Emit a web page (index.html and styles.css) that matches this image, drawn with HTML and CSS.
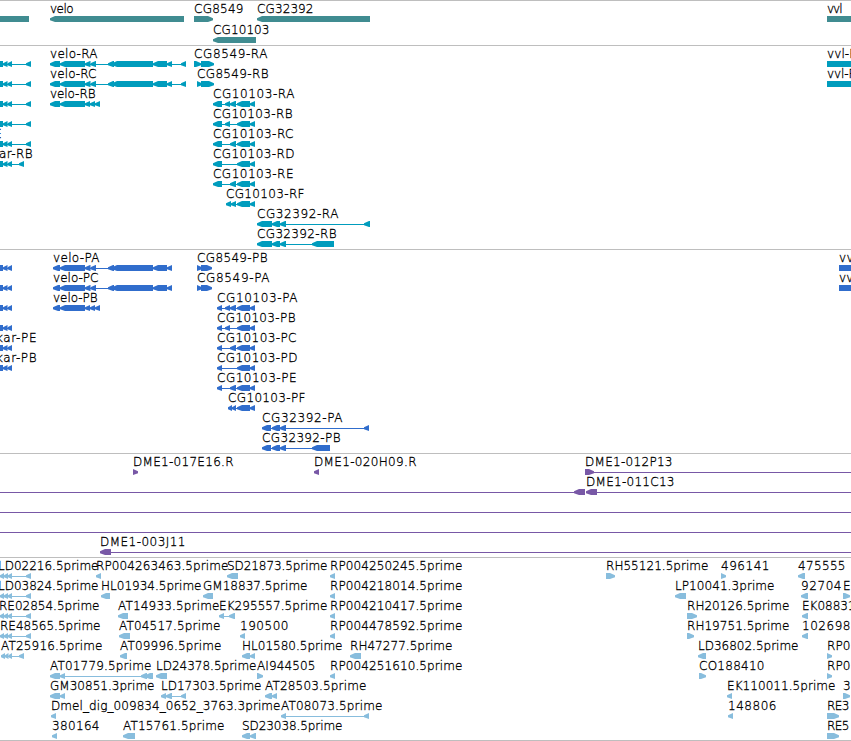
FILE: index.html
```html
<!DOCTYPE html>
<html lang="en">
<head>
  <meta charset="UTF-8" />
  <meta name="viewport" content="width=device-width, initial-scale=1.0" />
  <title>Genome Browser</title>
  <link rel="stylesheet" href="styles.css">
</head>
<body>
  <div class="browser">
    <div class="track genes"><svg id="genes"></svg></div>
    <div class="track transcripts"><svg id="transcripts"></svg></div>
    <div class="track proteins"><svg id="proteins"></svg></div>
    <div class="track clones"><svg id="clones"></svg></div>
    <div class="track ests"><svg id="ests"></svg></div>
  </div>
  <script src="script.js"></script>
</body>
</html>
```
FILE: styles.css
```css
body {
  margin: 0;
  background-color: #fff;
  overflow: hidden;
}

.browser {
  display: flex;
  flex-direction: column;
  width: 851px;
  border-bottom: 1px solid #bebebe;
}

.track {
  border-top: 1px solid #bebebe;
}

.track svg {
  display: block;
  width: 100%;
  height: 100%;
  overflow: hidden;
}

.track text {
  font-family: "DejaVu Sans Light", "DejaVu Sans", sans-serif;
  font-weight: 200;
  font-size: 12px;
  fill: #000;
  stroke: #000;
  stroke-width: 0.3px;
}

.genes {
  height: 44px;
  color: #408c91;
}

.transcripts {
  height: 203px;
  color: #009cbd;
}

.proteins {
  height: 203px;
  color: #306dcc;
}

.clones {
  height: 103px;
  color: #7858a6;
}

.ests {
  height: 182px;
  color: #88bddd;
}

.shape {
  fill: currentColor;
}
```
FILE: script.js
```js
var NS = 'http://www.w3.org/2000/svg';

// feature: [row, label, labelStart, labelEnd, direction, [[start, end], ...]]
var kar = [[-6, 3], [3, 7.5], [7.5, 12], [26, 31]];
var karShort = [[-6, 3], [3, 7.5], [7.5, 12], [19, 24]];
var karP = [[-6, 3], [3, 7.5], [7.5, 12]];
var velo = [[50, 60], [60, 85], [85, 90.5], [90.5, 96], [108, 114], [112, 153], [153, 167], [167, 172], [181, 186]];
var veloP = [[53, 60], [60, 85], [85, 90.5], [90.5, 96], [108, 114], [112, 153], [153, 167], [167, 172]];
var estKar = [[0, 4], [4, 8], [8, 12], [26, 31]];

var genes = [
  [0, '', 0, 0, '-', [[-20, 29]]],
  [0, 'velo', 50, 73, '-', [[50, 184]]],
  [0, 'CG8549', 194, 243, '+', [[194, 213]]],
  [0, 'CG32392', 257, 313, '-', [[257, 370]]],
  [0, 'vvl', 827, 842, '+', [[827, 880]]],
  [1, 'CG10103', 213, 269, '-', [[213, 256]]]
];

var transcripts = [
  [0, '', 0, 0, '-', kar],
  [1, '', 0, 0, '-', kar],
  [2, '', 0, 0, '-', kar],
  [3, '', 0, 0, '-', kar],
  [4, 'kar-RE', -39, 1, '-', kar],
  [5, 'kar-RB', -8, 32, '-', karShort],
  [0, 'velo-RA', 50, 97, '-', velo],
  [1, 'velo-RC', 50, 96, '-', velo],
  [2, 'velo-RB', 50, 95, '-', [[50, 60], [60, 85], [85, 90], [90, 95], [95, 100]]],
  [0, 'CG8549-RA', 194, 267, '+', [[194, 201], [201, 214]]],
  [1, 'CG8549-RB', 197, 268, '+', [[197, 202], [201, 214]]],
  [2, 'CG10103-RA', 213, 294, '-', [[213, 222], [225, 230], [230, 236], [237, 250], [250, 255]]],
  [3, 'CG10103-RB', 213, 292, '-', [[213, 222], [225, 230], [237, 250], [250, 255]]],
  [4, 'CG10103-RC', 213, 293, '-', [[213, 222], [230, 236], [237, 250], [250, 255]]],
  [5, 'CG10103-RD', 213, 294, '-', [[213, 222], [237, 250], [250, 255]]],
  [6, 'CG10103-RE', 213, 293, '-', [[213, 222], [230, 236], [237, 250], [250, 255]]],
  [7, 'CG10103-RF', 226, 304, '-', [[226, 231], [231, 236], [237, 250], [250, 255]]],
  [8, 'CG32392-RA', 257, 338, '-', [[257, 272], [272, 280], [280, 286], [364, 370]]],
  [9, 'CG32392-RB', 257, 336, '-', [[257, 272], [272, 280], [280, 286], [312, 334]]],
  [0, 'vvl-RA', 827, 865, '+', [[827, 880]]],
  [1, 'vvl-RB', 827, 864, '+', [[827, 880]]]
];

var proteins = [
  [0, '', 0, 0, '-', karP],
  [1, '', 0, 0, '-', karP],
  [2, '', 0, 0, '-', karP],
  [3, '', 0, 0, '-', karP],
  [4, 'kar-PE', -4, 36, '-', karP],
  [5, 'kar-PB', -4, 36, '-', karP],
  [0, 'velo-PA', 53, 99, '-', veloP],
  [1, 'velo-PC', 53, 98, '-', veloP],
  [2, 'velo-PB', 53, 97, '-', [[53, 60], [60, 85], [85, 90], [90, 95], [95, 100]]],
  [0, 'CG8549-PB', 197, 267, '+', [[197, 202], [201, 212]]],
  [1, 'CG8549-PA', 197, 269, '+', [[197, 202], [201, 212]]],
  [2, 'CG10103-PA', 217, 297, '-', [[217, 222], [225, 230], [230, 236], [237, 250], [250, 255]]],
  [3, 'CG10103-PB', 217, 295, '-', [[217, 222], [225, 230], [237, 250], [250, 255]]],
  [4, 'CG10103-PC', 217, 296, '-', [[217, 222], [230, 236], [237, 250], [250, 255]]],
  [5, 'CG10103-PD', 217, 297, '-', [[217, 222], [237, 250], [250, 255]]],
  [6, 'CG10103-PE', 217, 296, '-', [[217, 222], [230, 236], [237, 250], [250, 255]]],
  [7, 'CG10103-PF', 228, 305, '-', [[228, 232], [232, 236], [237, 250], [250, 255]]],
  [8, 'CG32392-PA', 262, 342, '-', [[262, 271], [272, 280], [280, 286], [364, 369]]],
  [9, 'CG32392-PB', 262, 340, '-', [[262, 271], [272, 280], [280, 286], [312, 330]]],
  [0, 'vvl-PA', 839, 877, '+', [[839, 880]]],
  [1, 'vvl-PB', 839, 876, '+', [[839, 880]]]
];

var clones = [
  [0, 'DME1-017E16.R', 133, 233, '+', [[133, 138]]],
  [0, 'DME1-020H09.R', 314, 416, '-', [[314, 319]]],
  [0, 'DME1-012P13', 585, 672, '+', [[585, 594], [870, 880]]],
  [1, '', 0, 0, '-', [[-20, -10], [574, 585]]],
  [1, 'DME1-011C13', 586, 674, '-', [[586, 597], [870, 880]]],
  [2, '', 0, 0, '-', [[-20, -10], [870, 880]]],
  [3, '', 0, 0, '-', [[-20, -10], [870, 880]]],
  [4, 'DME1-003J11', 100, 185, '-', [[100, 111], [870, 880]]]
];

var ests = [
  [0, 'LD02216.5prime', -2, 98, '-', estKar],
  [0, 'RP004263463.5prime', 96, 228, '-', [[96, 101]]],
  [0, 'SD21873.5prime', 227, 327, '-', [[227, 238]]],
  [0, 'RP004250245.5prime', 330, 462, '-', [[330, 335]]],
  [0, 'RH55121.5prime', 606, 708, '+', [[606, 615]]],
  [0, '496141', 721, 769, '+', [[721, 726]]],
  [0, '475555', 798, 845, '-', [[798, 805]]],
  [1, 'LD03824.5prime', -2, 98, '-', estKar],
  [1, 'HL01934.5prime', 101, 201, '-', [[101, 110]]],
  [1, 'GM18837.5prime', 203, 307, '-', [[203, 213]]],
  [1, 'RP004218014.5prime', 330, 462, '-', [[330, 335]]],
  [1, 'LP10041.3prime', 675, 774, '-', [[675, 686]]],
  [1, '92704', 801, 841, '-', [[801, 808]]],
  [1, 'EK', 843, 858, '+', [[843, 850]]],
  [2, 'RE02854.5prime', -1, 99, '-', estKar],
  [2, 'AT14933.5prime', 118, 219, '-', [[118, 128]]],
  [2, 'EK295557.5prime', 219, 327, '-', [[219, 224], [229, 235]]],
  [2, 'RP004210417.5prime', 330, 462, '-', [[330, 335]]],
  [2, 'RH20126.5prime', 687, 789, '+', [[687, 697]]],
  [2, 'EK08831', 802, 855, '-', [[802, 808]]],
  [3, 'RE48565.5prime', 0, 100, '-', estKar],
  [3, 'AT04517.5prime', 119, 220, '-', [[119, 130]]],
  [3, '190500', 240, 288, '-', [[240, 245]]],
  [3, 'RP004478592.5prime', 330, 462, '-', [[330, 335]]],
  [3, 'RH19751.5prime', 687, 789, '+', [[687, 694]]],
  [3, '102698', 802, 850, '-', [[802, 808]]],
  [4, 'AT25916.5prime', 1, 102, '-', [[1, 5], [5, 8.5], [8.5, 12], [19, 24]]],
  [4, 'AT09996.5prime', 120, 221, '-', [[120, 127]]],
  [4, 'HL01580.5prime', 242, 342, '-', [[242, 250], [250, 255]]],
  [4, 'RH47277.5prime', 350, 452, '-', [[350, 361]]],
  [4, 'LD36802.5prime', 698, 798, '-', [[698, 706]]],
  [4, 'RP0', 827, 850, '+', [[827, 832]]],
  [5, 'AT01779.5prime', 50, 151, '-', [[50, 60], [60, 65], [141, 147], [145, 153]]],
  [5, 'LD24378.5prime', 156, 256, '-', [[156, 167]]],
  [5, 'AI944505', 257, 315, '+', [[257, 263]]],
  [5, 'RP004251610.5prime', 330, 462, '-', [[330, 335]]],
  [5, 'CO188410', 699, 764, '+', [[699, 706]]],
  [5, 'RP0', 827, 850, '+', [[827, 832]]],
  [6, 'GM30851.3prime', 50, 154, '-', [[50, 60], [60, 65]]],
  [6, 'LD17303.5prime', 161, 261, '-', [[161, 166], [166, 172], [181, 186]]],
  [6, 'AT28503.5prime', 265, 366, '-', [[265, 272], [272, 277]]],
  [6, 'EK110011.5prime', 727, 835, '-', [[727, 732]]],
  [6, '3', 843, 851, '+', [[843, 850]]],
  [7, 'Dmel_dig_009834_0652_3763.3prime', 51, 280, '-', [[51, 56]]],
  [7, 'AT08073.5prime', 281, 382, '-', [[281, 286], [364, 369]]],
  [7, '148806', 728, 776, '-', [[728, 733]]],
  [7, 'RE3', 827, 849, '+', [[827, 839]]],
  [8, '380164', 52, 99, '-', [[52, 57]]],
  [8, 'AT15761.5prime', 123, 224, '-', [[123, 135]]],
  [8, 'SD23038.5prime', 242, 342, '-', [[242, 250], [250, 256]]],
  [8, 'RE5', 827, 849, '+', [[827, 839]]]
];

function add(svg, tag, attrs) {
  var el = document.createElementNS(NS, tag);
  for (var key in attrs) {
    el.setAttribute(key, attrs[key]);
  }
  svg.appendChild(el);
  return el;
}

// block with a blunt pointed end that shows the strand
function arrow(svg, x1, x2, top, dir) {
  var head = Math.min(5, x2 - x1);
  var bottom = top + 6;
  var points;
  if (dir === '-') {
    points = [[x1, top + 2.2], [x1 + head, top], [x2, top], [x2, bottom], [x1 + head, bottom], [x1, top + 4.2]];
  } else {
    points = [[x2, top + 2.2], [x2 - head, top], [x1, top], [x1, bottom], [x2 - head, bottom], [x2, top + 4.2]];
  }
  add(svg, 'polygon', { 'class': 'shape', points: points.join(' ') });
}

function drawTrack(id, features, pitch) {
  var svg = document.getElementById(id);
  features.forEach(function (f) {
    var y = f[0] * pitch;
    var blocks = f[5];
    var first = blocks[0][0];
    var last = blocks[blocks.length - 1][1];

    if (blocks.length > 1) {
      add(svg, 'rect', { 'class': 'shape', x: first + 2, y: y + 18, width: last - first - 4, height: 1 });
    }
    blocks.forEach(function (b) {
      arrow(svg, b[0], b[1], y + 15, f[4]);
    });
    if (f[1]) {
      var text = add(svg, 'text', { x: f[2], y: y + 12, textLength: f[3] - f[2] + 0.5 });
      text.textContent = f[1];
    }
  });
}

drawTrack('genes', genes, 21);
drawTrack('transcripts', transcripts, 20);
drawTrack('proteins', proteins, 20);
drawTrack('clones', clones, 20);
drawTrack('ests', ests, 20);
```
